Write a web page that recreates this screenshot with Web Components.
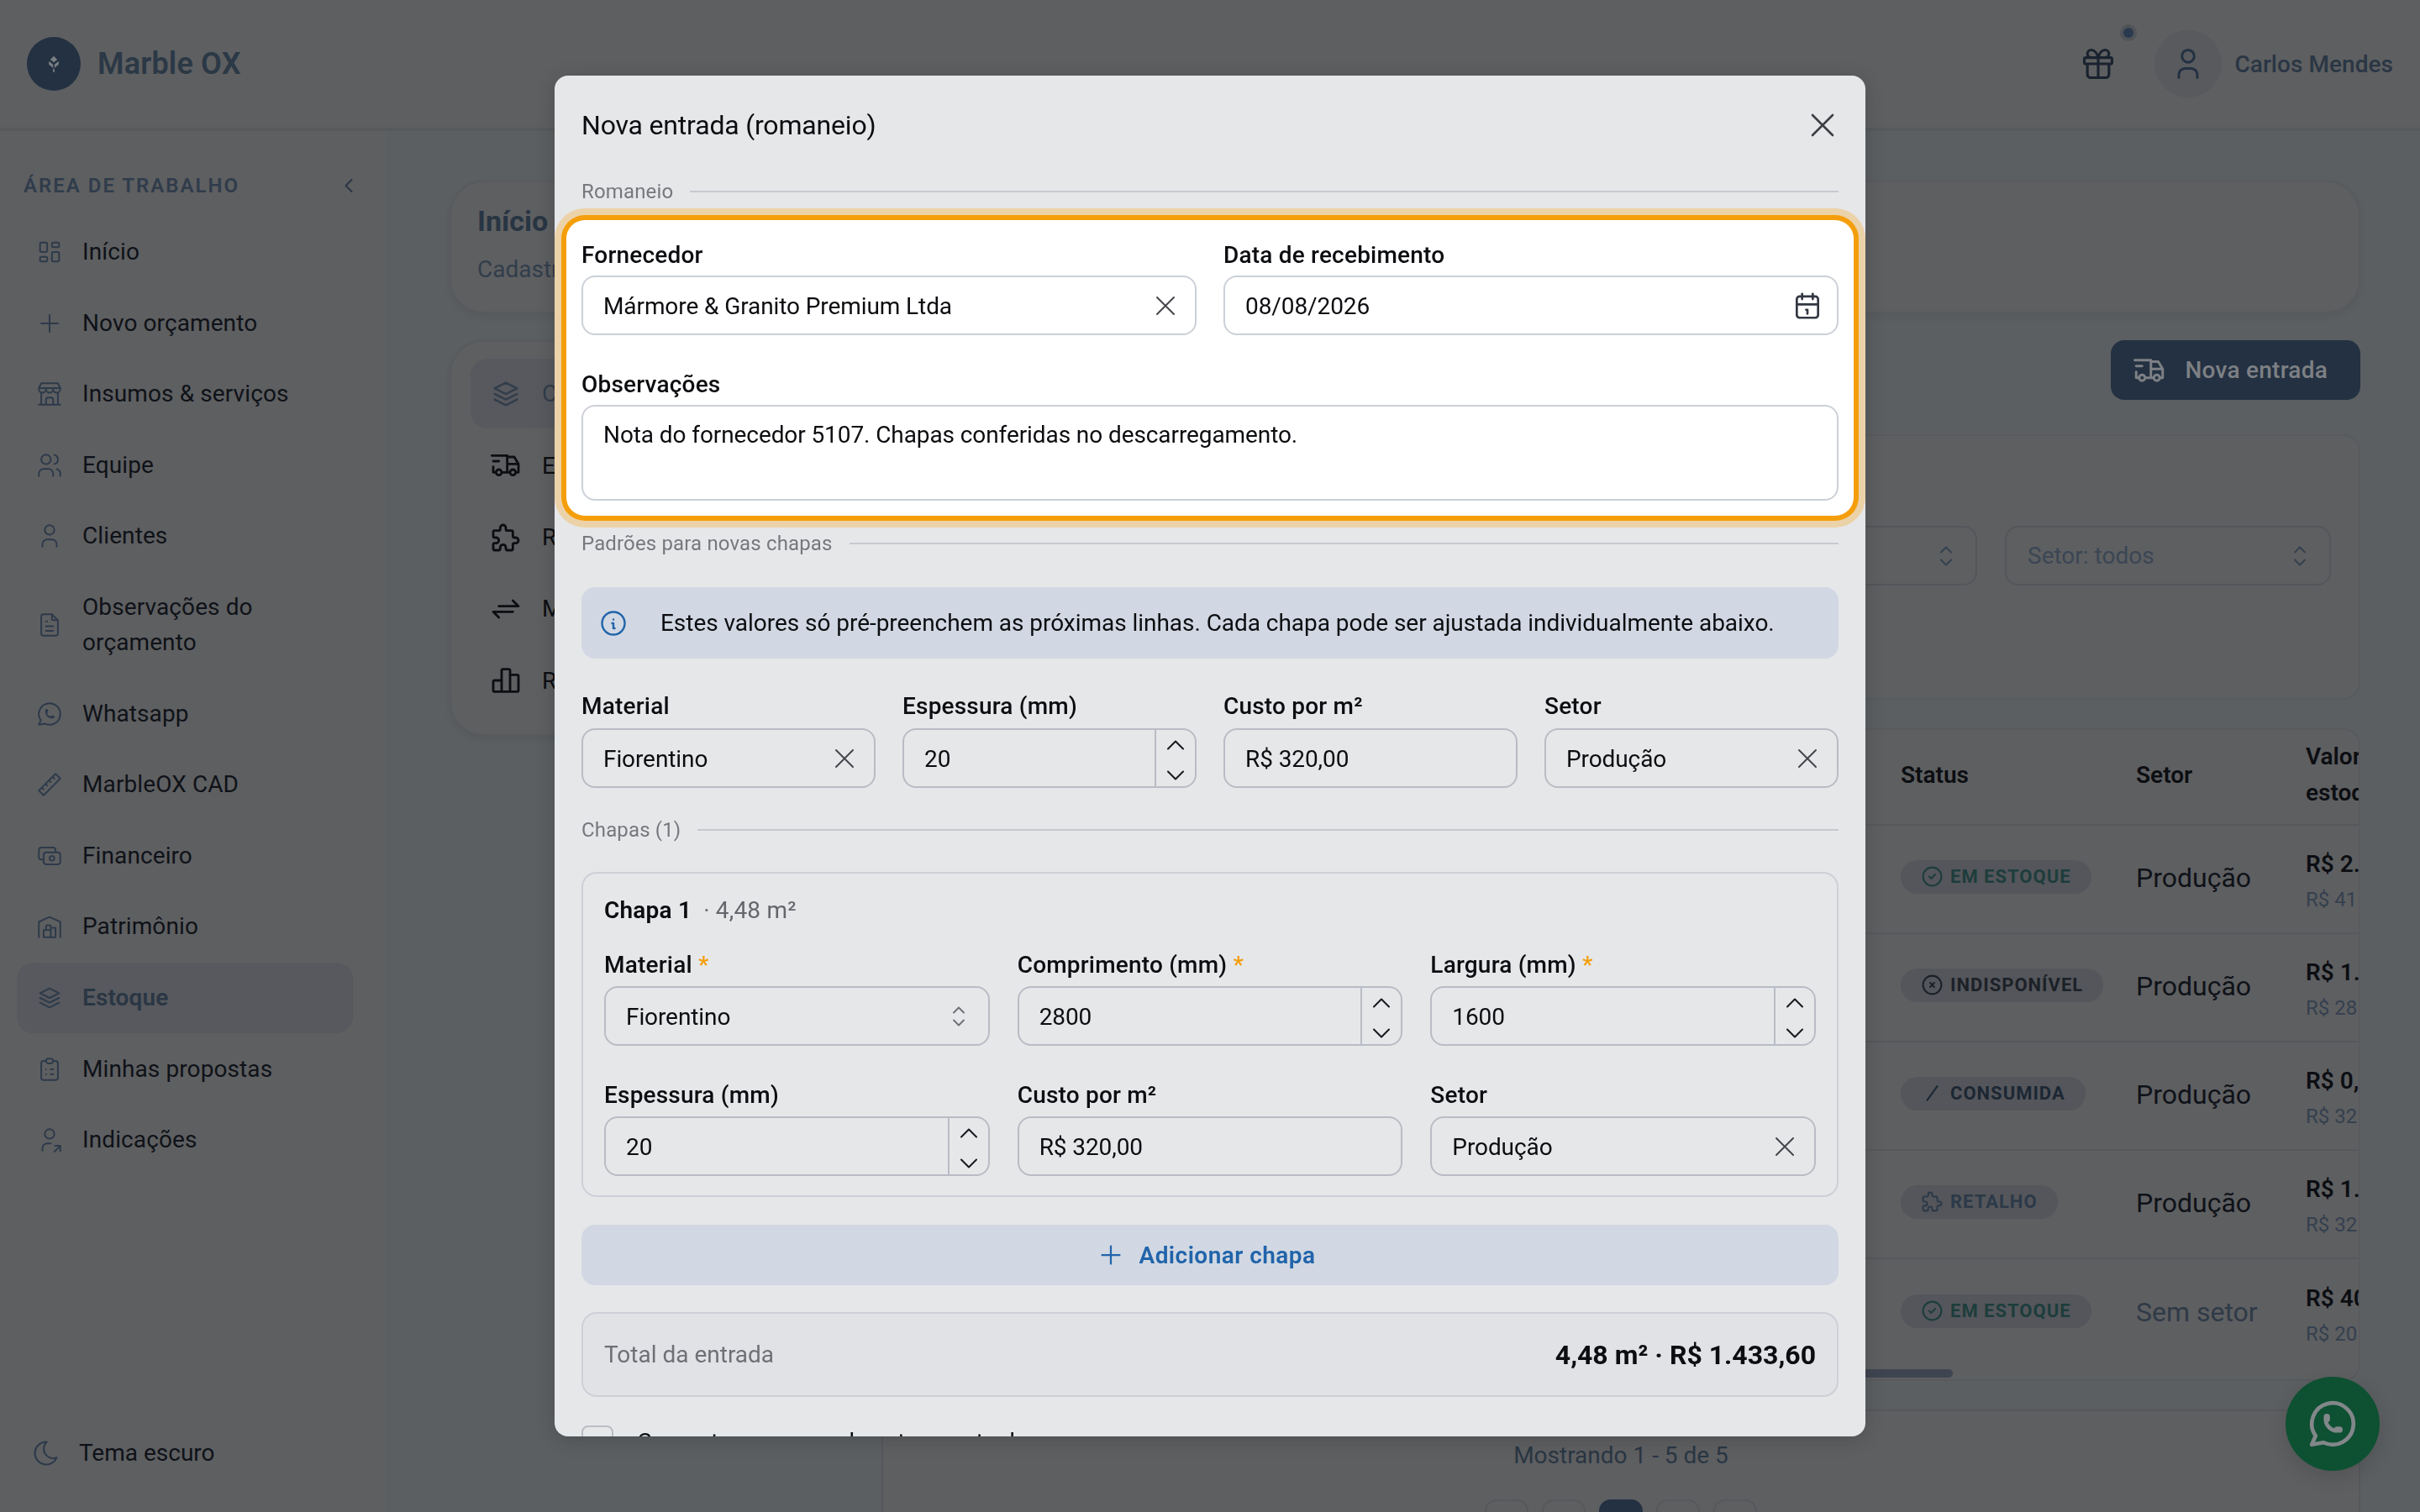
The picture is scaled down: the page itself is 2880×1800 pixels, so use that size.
<!DOCTYPE html>
<html lang="pt-BR">
<head>
<meta charset="utf-8">
<title>Marble OX</title>
<style>
  html, body { margin: 0; width: 2880px; height: 1800px; overflow: hidden; }
  body { font-family: Roboto, "Liberation Sans", sans-serif; font-size: 28px; background: #5b5f62; color: #0f1218; }
  #shell { display: grid; grid-template-rows: 152px 1fr; grid-template-columns: 463px minmax(0, 1fr); height: 1800px; }
  mo-header { grid-column: 1 / 3; }
</style>
</head>
<body>
<div id="shell">
  <mo-header></mo-header>
  <mo-sidebar>
    <mo-nav-item icon="dashboard">Início</mo-nav-item>
    <mo-nav-item icon="plus">Novo orçamento</mo-nav-item>
    <mo-nav-item icon="store">Insumos &amp; serviços</mo-nav-item>
    <mo-nav-item icon="users">Equipe</mo-nav-item>
    <mo-nav-item icon="user">Clientes</mo-nav-item>
    <mo-nav-item icon="file">Observações do<br>orçamento</mo-nav-item>
    <mo-nav-item icon="whatsapp">Whatsapp</mo-nav-item>
    <mo-nav-item icon="ruler">MarbleOX CAD</mo-nav-item>
    <mo-nav-item icon="cash">Financeiro</mo-nav-item>
    <mo-nav-item icon="warehouse">Patrimônio</mo-nav-item>
    <mo-nav-item icon="stack" active>Estoque</mo-nav-item>
    <mo-nav-item icon="clipboard">Minhas propostas</mo-nav-item>
    <mo-nav-item icon="usershare">Indicações</mo-nav-item>
  </mo-sidebar>
  <mo-stock-page></mo-stock-page>
</div>

<mo-fab></mo-fab>

<mo-modal heading="Nova entrada (romaneio)">
  <mo-divider>Romaneio</mo-divider>
  <mo-spotlight>
    <mo-grid cols="2">
      <mo-field label="Fornecedor" value="Mármore &amp; Granito Premium Ltda" kind="clear"></mo-field>
      <mo-field label="Data de recebimento" value="08/08/2026" kind="date"></mo-field>
    </mo-grid>
    <mo-field style="margin-top:38px" label="Observações" value="Nota do fornecedor 5107. Chapas conferidas no descarregamento." kind="textarea"></mo-field>
  </mo-spotlight>
  <mo-divider style="margin-top:13px">Padrões para novas chapas</mo-divider>
  <mo-alert>Estes valores só pré-preenchem as próximas linhas. Cada chapa pode ser ajustada individualmente abaixo.</mo-alert>
  <mo-grid cols="4" style="margin-top:36px; --label-gap:5px">
    <mo-field label="Material" value="Fiorentino" kind="clear"></mo-field>
    <mo-field label="Espessura (mm)" value="20" kind="number"></mo-field>
    <mo-field label="Custo por m²" value="R$ 320,00"></mo-field>
    <mo-field label="Setor" value="Produção" kind="clear"></mo-field>
  </mo-grid>
  <mo-divider style="margin-top:30px">Chapas (1)</mo-divider>
  <mo-chapa-card number="1" area="4,48 m²">
    <mo-field label="Material" value="Fiorentino" kind="select" required></mo-field>
    <mo-field label="Comprimento (mm)" value="2800" kind="number" required></mo-field>
    <mo-field label="Largura (mm)" value="1600" kind="number" required></mo-field>
    <mo-field label="Espessura (mm)" value="20" kind="number"></mo-field>
    <mo-field label="Custo por m²" value="R$ 320,00"></mo-field>
    <mo-field label="Setor" value="Produção" kind="clear"></mo-field>
  </mo-chapa-card>
  <mo-add-button>Adicionar chapa</mo-add-button>
  <mo-total label="Total da entrada" value="4,48 m² · R$ 1.433,60"></mo-total>
  <mo-checkbox>Converter para uso de estoque atual</mo-checkbox>
</mo-modal>

<script>
const ICONS = {
  dashboard: 'M5 4h4a1 1 0 0 1 1 1v6a1 1 0 0 1 -1 1h-4a1 1 0 0 1 -1 -1v-6a1 1 0 0 1 1 -1M5 16h4a1 1 0 0 1 1 1v2a1 1 0 0 1 -1 1h-4a1 1 0 0 1 -1 -1v-2a1 1 0 0 1 1 -1M15 12h4a1 1 0 0 1 1 1v6a1 1 0 0 1 -1 1h-4a1 1 0 0 1 -1 -1v-6a1 1 0 0 1 1 -1M15 4h4a1 1 0 0 1 1 1v2a1 1 0 0 1 -1 1h-4a1 1 0 0 1 -1 -1v-2a1 1 0 0 1 1 -1',
  plus: 'M12 5v14M5 12h14',
  store: 'M3 21l18 0M3 7v1a3 3 0 0 0 6 0v-1m0 1a3 3 0 0 0 6 0v-1m0 1a3 3 0 0 0 6 0v-1h-18l2 -4h14l2 4M5 21l0 -10.15M19 21l0 -10.15M9 21v-4a2 2 0 0 1 2 -2h2a2 2 0 0 1 2 2v4',
  users: 'M5 7a4 4 0 1 0 8 0a4 4 0 1 0 -8 0M3 21v-2a4 4 0 0 1 4 -4h4a4 4 0 0 1 4 4v2M16 3.13a4 4 0 0 1 0 7.75M21 21v-2a4 4 0 0 0 -3 -3.85',
  user: 'M8 7a4 4 0 1 0 8 0a4 4 0 0 0 -8 0M6 21v-2a4 4 0 0 1 4 -4h4a4 4 0 0 1 4 4v2',
  file: 'M14 3v4a1 1 0 0 0 1 1h4M17 21h-10a2 2 0 0 1 -2 -2v-14a2 2 0 0 1 2 -2h7l5 5v11a2 2 0 0 1 -2 2zM9 9l1 0M9 13l6 0M9 17l6 0',
  whatsapp: 'M3 21l1.65 -3.8a9 9 0 1 1 3.4 2.9l-5.05 .9M9 10a.5 .5 0 0 0 1 0v-1a.5 .5 0 0 0 -1 0v1a5 5 0 0 0 5 5h1a.5 .5 0 0 0 0 -1h-1a.5 .5 0 0 0 0 1',
  ruler: 'M17 3l4 4l-14 14l-4 -4zM16 7l-1.5 -1.5M13 10l-1.5 -1.5M10 13l-1.5 -1.5M7 16l-1.5 -1.5',
  cash: 'M7 11a2 2 0 0 1 2 -2h10a2 2 0 0 1 2 2v6a2 2 0 0 1 -2 2h-10a2 2 0 0 1 -2 -2zM12 14a2 2 0 1 0 4 0a2 2 0 0 0 -4 0M17 9v-2a2 2 0 0 0 -2 -2h-10a2 2 0 0 0 -2 2v6a2 2 0 0 0 2 2h2',
  warehouse: 'M3 21v-13l9 -4l9 4v13M13 13h4v8h-10v-6h6M13 21v-9a1 1 0 0 0 -1 -1h-2a1 1 0 0 0 -1 1v3',
  stack: 'M12 4l-8 4l8 4l8 -4l-8 -4M4 12l8 4l8 -4M4 16l8 4l8 -4',
  clipboard: 'M9 5h-2a2 2 0 0 0 -2 2v12a2 2 0 0 0 2 2h10a2 2 0 0 0 2 -2v-12a2 2 0 0 0 -2 -2h-2M9 5a2 2 0 0 1 2 -2h2a2 2 0 0 1 2 2v0a2 2 0 0 1 -2 2h-2a2 2 0 0 1 -2 -2zM9 12l.01 0M13 12l2 0M9 16l.01 0M13 16l2 0',
  usershare: 'M8 7a4 4 0 1 0 8 0a4 4 0 0 0 -8 0M6 21v-2a4 4 0 0 1 4 -4h3M16 22l5 -5M21 21.5v-4.5h-4.5',
  moon: 'M12 3c.132 0 .263 0 .393 0a7.5 7.5 0 0 0 7.92 12.446a9 9 0 1 1 -8.313 -12.454z',
  truck: 'M5 17a2 2 0 1 0 4 0a2 2 0 1 0 -4 0M15 17a2 2 0 1 0 4 0a2 2 0 1 0 -4 0M5 17h-2v-4m-1 -8h11v12m-4 0h6m4 0h2v-6h-8m0 -5h5l3 5M3 9l4 0',
  puzzle: 'M4 7h3a1 1 0 0 0 1 -1v-1a2 2 0 0 1 4 0v1a1 1 0 0 0 1 1h3a1 1 0 0 1 1 1v3a1 1 0 0 0 1 1h1a2 2 0 0 1 0 4h-1a1 1 0 0 0 -1 1v3a1 1 0 0 1 -1 1h-3a1 1 0 0 1 -1 -1v-1a2 2 0 0 0 -4 0v1a1 1 0 0 1 -1 1h-3a1 1 0 0 1 -1 -1v-3a1 1 0 0 1 1 -1h1a2 2 0 0 0 0 -4h-1a1 1 0 0 1 -1 -1v-3a1 1 0 0 1 1 -1',
  exchange: 'M7 10h14l-4 -4M17 14h-14l4 4',
  chart: 'M3 13a1 1 0 0 1 1 -1h4a1 1 0 0 1 1 1v6a1 1 0 0 1 -1 1h-4a1 1 0 0 1 -1 -1zM15 9a1 1 0 0 1 1 -1h4a1 1 0 0 1 1 1v10a1 1 0 0 1 -1 1h-4a1 1 0 0 1 -1 -1zM9 5a1 1 0 0 1 1 -1h4a1 1 0 0 1 1 1v14a1 1 0 0 1 -1 1h-4a1 1 0 0 1 -1 -1zM4 20h14',
  gift: 'M3 9a1 1 0 0 1 1 -1h16a1 1 0 0 1 1 1v2a1 1 0 0 1 -1 1h-16a1 1 0 0 1 -1 -1zM12 8l0 13M19 12v7a2 2 0 0 1 -2 2h-10a2 2 0 0 1 -2 -2v-7M7.5 8a2.5 2.5 0 0 1 0 -5a4.8 8 0 0 1 4.5 5a4.8 8 0 0 1 4.5 -5a2.5 2.5 0 0 1 0 5',
  left: 'M15 6l-6 6l6 6',
  x: 'M18 6l-12 12M6 6l12 12',
  calendar: 'M4 7a2 2 0 0 1 2 -2h12a2 2 0 0 1 2 2v12a2 2 0 0 1 -2 2h-12a2 2 0 0 1 -2 -2v-12zM16 3v4M8 3v4M4 11h16M11 15h1M12 15v3',
  info: 'M3 12a9 9 0 1 0 18 0a9 9 0 0 0 -18 0M12 9h.01M11 12h1v4h1',
  selector: 'M8 9l4 -4l4 4M16 15l-4 4l-4 -4',
  up: 'M6 15l6 -6l6 6',
  down: 'M6 9l6 6l6 -6',
  check: 'M3 12a9 9 0 1 0 18 0a9 9 0 1 0 -18 0M9 12l2 2l4 -4',
  circlex: 'M3 12a9 9 0 1 0 18 0a9 9 0 1 0 -18 0M10 10l4 4m0 -4l-4 4',
  slash: 'M17 5l-10 14'
};

class MoIcon extends HTMLElement {
  constructor() {
    super();
    this.attachShadow({ mode: 'open' });
    const size = this.getAttribute('size') || 34;
    const stroke = this.getAttribute('stroke') || 1.4;
    const d = ICONS[this.getAttribute('name')] || '';
    this.shadowRoot.innerHTML = `
      <style>:host { display: inline-flex; flex: none; } svg { display: block; }</style>
      <svg width="${size}" height="${size}" viewBox="0 0 24 24" fill="none" stroke="currentColor"
           stroke-width="${stroke}" stroke-linecap="round" stroke-linejoin="round"><path d="${d}"/></svg>`;
  }
}
customElements.define('mo-icon', MoIcon);

class MoHeader extends HTMLElement {
  constructor() {
    super();
    this.attachShadow({ mode: 'open' });
    this.shadowRoot.innerHTML = `
      <style>
        :host { display: flex; align-items: center; box-sizing: border-box; height: 152px; padding: 0 32px;
                background: #5e5f61; box-shadow: 0 4px 0 #58595b; position: relative; z-index: 1; }
        .logo { width: 64px; height: 64px; border-radius: 50%; background: #243142; display: flex; align-items: center; justify-content: center; }
        .brand { margin-left: 20px; font-size: 36px; font-weight: 600; letter-spacing: .2px; color: #2b3846; }
        .right { margin-left: auto; display: flex; align-items: center; }
        .gift { position: relative; display: flex; color: #19232f; margin-right: 45px; }
        .dot { position: absolute; left: 52px; top: -21px; width: 12px; height: 12px; border-radius: 50%; background: #2a3a4e; box-shadow: 0 0 0 4px #505357; }
        .avatar { width: 80px; height: 80px; border-radius: 50%; background: #585a5e; color: #233042; display: flex; align-items: center; justify-content: center; }
        .name { margin-left: 15px; font-weight: 500; letter-spacing: .05px; color: #2a3644; }
      </style>
      <div class="logo">
        <svg width="20" height="22" viewBox="0 0 24 26" fill="#7a7f82">
          <path d="M12 2l5 5-5 4-5-4zM5 9l6 5v5L5 14zM19 9l-6 5v5l6-5zM11 20v5h2v-5z"/>
        </svg>
      </div>
      <div class="brand">Marble OX</div>
      <div class="right">
        <div class="gift"><mo-icon name="gift" size="44" stroke="1.7"></mo-icon><span class="dot"></span></div>
        <div class="avatar"><mo-icon name="user" size="44" stroke="1.6"></mo-icon></div>
        <div class="name">Carlos Mendes</div>
      </div>`;
  }
}
customElements.define('mo-header', MoHeader);

class MoSidebar extends HTMLElement {
  constructor() {
    super();
    this.attachShadow({ mode: 'open' });
    this.shadowRoot.innerHTML = `
      <style>
        :host { display: flex; flex-direction: column; box-sizing: border-box; height: 1648px; background: #5e5f61;
                border-right: 1px solid #595c60; padding: 49px 0 48px; }
        .section { display: flex; align-items: center; justify-content: space-between; height: 40px; padding: 0 33px 0 28px; margin-bottom: 17px;
                   font-size: 24px; font-weight: 600; letter-spacing: 2px; color: #303c4b; }
        .section mo-icon { color: #2a3644; }
        nav { display: flex; flex-direction: column; gap: .6px; padding: 0 42px 0 20px; }
        .theme { margin-top: auto; display: flex; align-items: center; gap: 21px; padding-left: 37px; line-height: 44px; color: #0f1218; }
        .theme mo-icon { color: #2d3a4a; }
      </style>
      <div class="section">ÁREA DE TRABALHO <mo-icon name="left" size="28" stroke="1.8"></mo-icon></div>
      <nav><slot></slot></nav>
      <div class="theme"><mo-icon name="moon" size="36" stroke="1.4"></mo-icon>Tema escuro</div>`;
  }
}
customElements.define('mo-sidebar', MoSidebar);

class MoNavItem extends HTMLElement {
  constructor() {
    super();
    this.attachShadow({ mode: 'open' });
    this.shadowRoot.innerHTML = `
      <style>
        :host { display: flex; align-items: center; gap: 22px; padding: 21px 22px; line-height: 42px; letter-spacing: .1px; border-radius: 20px; color: #0f1218; }
        :host([active]) { background: #57595e; color: #2a3644; font-weight: 600; }
        mo-icon { color: #2d3a4a; }
      </style>
      <mo-icon name="${this.getAttribute('icon')}" size="34" stroke="1.4"></mo-icon>
      <span><slot></slot></span>`;
  }
}
customElements.define('mo-nav-item', MoNavItem);

class MoStockPage extends HTMLElement {
  constructor() {
    super();
    this.attachShadow({ mode: 'open' });
    const tabs = [['stack', 'Chapas'], ['truck', 'Entradas'], ['puzzle', 'Retalhos'], ['exchange', 'Movimentações'], ['chart', 'Relatórios']];
    this.shadowRoot.innerHTML = `
      <style>
        :host { display: block; box-sizing: border-box; height: 1648px; overflow: hidden; padding: 63px 71px 0 72px; background: #5b5f62; }
        .card { background: #5e5f61; border: 2px solid #595a5e; box-sizing: border-box; }
        .hero { height: 158px; border-radius: 40px; padding: 24px 31px; box-shadow: 0 4px 8px rgba(0,0,0,.06); }
        .hero h1 { margin: 0; font-size: 34px; font-weight: 700; line-height: 44px; color: #283543; }
        .hero p { margin: 14px 0 0; line-height: 44px; color: #323d4b; }
        .cols { display: grid; grid-template-columns: 480px minmax(0, 1fr); gap: 34px; margin-top: 32px; }
        .tabs { height: 471px; border-radius: 40px; padding: 20px 23px; display: flex; flex-direction: column; box-shadow: 0 4px 8px rgba(0,0,0,.06); }
        .tab { display: flex; align-items: center; gap: 23px; height: 84px; margin-bottom: 2px; padding-left: 22px; border-radius: 20px; color: #0c0e12; }
        .tab.on { background: #57595e; color: #323d4b; }
        .top { display: flex; justify-content: flex-end; height: 71px; margin-bottom: 41px; }
        .btn { display: flex; align-items: center; gap: 21px; height: 71px; box-sizing: border-box; padding: 0 39px 0 25px; border-radius: 16px; background: #243142; color: #7d8084; font-weight: 500; letter-spacing: .25px; }
        .filters { height: 316px; border-radius: 20px; padding: 107px 33px 0; display: flex; justify-content: flex-end; gap: 33px; }
        .select { width: 388px; height: 71px; box-sizing: border-box; border: 2px solid #54565b; border-radius: 16px; display: flex; align-items: center; justify-content: space-between; padding: 0 17px 0 25px; color: #3b4654; }
        .select mo-icon { color: #33404f; }
        .table { height: 777px; margin-top: 34px; border-radius: 20px; position: relative; overflow: hidden; }
        .thumb { position: absolute; left: 0; bottom: 2px; width: 1273px; height: 10px; border-radius: 5px; background: #3f4550; }
        .head { display: grid; grid-template-columns: 1179px 280px 202px 200px; box-sizing: border-box; height: 114px; padding-bottom: 6px; align-items: center; border-bottom: 2px solid #56585c; font-weight: 600; color: #0c0e12; line-height: 43px; }
        .head span { padding-left: 32px; white-space: nowrap; }
        .foot { margin-top: 34px; height: 200px; border: 2px solid #56585c; border-bottom: 0; background: #5e5f61; text-align: center; padding-top: 31px; box-sizing: border-box; color: #2a3644; line-height: 44px; }
        .pages { display: flex; justify-content: center; gap: 16px; margin-top: 30px; }
        .pages span { width: 52px; height: 52px; border: 2px solid #56585c; border-radius: 14px; box-sizing: border-box; }
        .pages .on { background: #243142; border-color: #243142; }
      </style>
      <div class="card hero"><h1>Início</h1><p>Cadastro de estoque</p></div>
      <div class="cols">
        <div class="card tabs">
          ${tabs.map((t, i) => `<div class="tab ${i === 0 ? 'on' : ''}"><mo-icon name="${t[0]}" size="40" stroke="${i === 0 ? 1.5 : 1.7}"></mo-icon>${t[1]}</div>`).join('')}
        </div>
        <div>
          <div class="top"><div class="btn"><mo-icon name="truck" size="42" stroke="1.7"></mo-icon>Nova entrada</div></div>
          <div class="card filters">
            <div class="select">Status: todos<mo-icon name="selector" size="36" stroke="1.3"></mo-icon></div>
            <div class="select">Setor: todos<mo-icon name="selector" size="36" stroke="1.3"></mo-icon></div>
          </div>
          <div class="card table">
            <div class="head"><span></span><span>Status</span><span>Setor</span><span>Valor em<br>estoque</span></div>
            <mo-row status="EM ESTOQUE" icon="check" tone="#1d3d3c" setor="Produção" val="R$ 2.1" sub="R$ 41"></mo-row>
            <mo-row status="INDISPONÍVEL" icon="circlex" tone="#1c2128" setor="Produção" val="R$ 1.2" sub="R$ 28"></mo-row>
            <mo-row status="CONSUMIDA" icon="slash" tone="#1c2733" setor="Produção" val="R$ 0,0" sub="R$ 32"></mo-row>
            <mo-row status="RETALHO" icon="puzzle" tone="#2c3948" setor="Produção" val="R$ 1.1" sub="R$ 32"></mo-row>
            <mo-row status="EM ESTOQUE" icon="check" tone="#1d3d3c" setor="Sem setor" muted val="R$ 40" sub="R$ 20"></mo-row>
            <div class="thumb"></div>
          </div>
          <div class="foot">Mostrando 1 - 5 de 5
            <div class="pages"><span></span><span></span><span class="on"></span><span></span><span></span></div>
          </div>
        </div>
      </div>`;
  }
}

class MoRow extends HTMLElement {
  constructor() {
    super();
    this.attachShadow({ mode: 'open' });
    const tone = this.getAttribute('tone');
    this.shadowRoot.innerHTML = `
      <style>
        :host { display: grid; grid-template-columns: 1179px 280px 202px 200px; box-sizing: border-box; height: 129px; align-items: center; border-bottom: 2px solid #56585c; }
        :host(:last-of-type) { border-bottom: 0; }
        .badge { display: inline-flex; align-items: center; gap: 7px; height: 40px; box-sizing: border-box; padding: 0 24px 0 23px; margin: -4px 0 0 32px; border-radius: 20px; background: #54565b;
                 font-size: 22px; font-weight: 700; letter-spacing: 1px; white-space: nowrap; color: ${tone}; }
        .setor { padding-left: 32px; margin-top: -4px; font-size: 32px; color: ${this.hasAttribute('muted') ? '#2f3a47' : '#0f1218'}; }
        .val { padding: 7px 0 0 32px; white-space: nowrap; }
        .val b { display: block; font-weight: 600; line-height: 42px; color: #0c0e12; }
        .val small { display: block; font-size: 24px; line-height: 42px; color: #35404e; }
      </style>
      <span></span>
      <span><span class="badge"><mo-icon name="${this.getAttribute('icon')}" size="29" stroke="1.7"></mo-icon>${this.getAttribute('status')}</span></span>
      <span class="setor">${this.getAttribute('setor')}</span>
      <span class="val"><b>${this.getAttribute('val')}</b><small>${this.getAttribute('sub')}</small></span>`;
  }
}
customElements.define('mo-row', MoRow);
customElements.define('mo-stock-page', MoStockPage);

class MoFab extends HTMLElement {
  constructor() {
    super();
    this.attachShadow({ mode: 'open' });
    this.shadowRoot.innerHTML = `
      <style>
        :host { position: fixed; z-index: 5; left: 2720px; top: 1639px; width: 112px; height: 112px; border-radius: 50%; background: #0e5032; color: #82878a;
                display: flex; align-items: center; justify-content: center; box-shadow: 0 8px 24px rgba(0,0,0,.12); }
      </style>
      <mo-icon name="whatsapp" size="66" stroke="1.7"></mo-icon>`;
  }
}
customElements.define('mo-fab', MoFab);

class MoModal extends HTMLElement {
  constructor() {
    super();
    this.attachShadow({ mode: 'open' });
    this.shadowRoot.innerHTML = `
      <style>
        :host { position: fixed; z-index: 10; inset: 0; display: flex; align-items: center; justify-content: center; pointer-events: none; }
        .box { width: 1560px; height: 1620px; box-sizing: border-box; background: #e6e7e9; border-radius: 16px; overflow: hidden; box-shadow: 0 4px 24px rgba(0,0,0,.16); }
        header { display: flex; align-items: center; justify-content: space-between; height: 118px; padding: 0 27px 0 32px; font-size: 32px; letter-spacing: -.18px; color: #0c0d10; }
        header mo-icon { color: #3c3e44; }
        .body { padding: 0 32px; }
      </style>
      <div class="box">
        <header><span>${this.getAttribute('heading')}</span><mo-icon name="x" size="48" stroke="1.3"></mo-icon></header>
        <div class="body"><slot></slot></div>
      </div>`;
  }
}
customElements.define('mo-modal', MoModal);

class MoDivider extends HTMLElement {
  constructor() {
    super();
    this.attachShadow({ mode: 'open' });
    this.shadowRoot.innerHTML = `
      <style>
        :host { display: flex; align-items: center; gap: 20px; height: 40px; font-size: 24px; letter-spacing: .15px; color: #76787e; }
        i { flex: 1; height: 2px; background: #c6c9cf; }
      </style>
      <span><slot></slot></span><i></i>`;
  }
}
customElements.define('mo-divider', MoDivider);

class MoSpotlight extends HTMLElement {
  constructor() {
    super();
    this.attachShadow({ mode: 'open' });
    this.shadowRoot.innerHTML = `
      <style>
        :host { display: block; box-sizing: border-box; height: 352px; margin: 14px -18px 0; padding: 21px 18px 0; background: #fff; border-radius: 22px;
                box-shadow: 0 0 0 6px #f59e0b, 0 0 0 14px #ecd2a8; --field-border: #ccd0d8; --label-gap: 3px; --textarea-h: 114px; }
      </style>
      <slot></slot>`;
  }
}
customElements.define('mo-spotlight', MoSpotlight);

class MoGrid extends HTMLElement {
  constructor() {
    super();
    this.attachShadow({ mode: 'open' });
    this.shadowRoot.innerHTML = `
      <style>:host { display: grid; grid-template-columns: repeat(${this.getAttribute('cols')}, 1fr); gap: 32px; }</style>
      <slot></slot>`;
  }
}
customElements.define('mo-grid', MoGrid);

class MoField extends HTMLElement {
  constructor() {
    super();
    this.attachShadow({ mode: 'open' });
    const kind = this.getAttribute('kind') || 'text';
    const star = this.hasAttribute('required') ? ' <span class="star">*</span>' : '';
    let extra = '';
    if (kind === 'clear') extra = '<mo-icon class="side" name="x" size="40" stroke="1.2"></mo-icon>';
    if (kind === 'select') extra = '<mo-icon class="side sel" name="selector" size="36" stroke="1.3"></mo-icon>';
    if (kind === 'date') extra = '<mo-icon class="side cal" name="calendar" size="38" stroke="1.7"></mo-icon>';
    if (kind === 'number') extra = '<div class="spin"><mo-icon name="up" size="36" stroke="1.35"></mo-icon><mo-icon name="down" size="36" stroke="1.35"></mo-icon></div>';
    this.shadowRoot.innerHTML = `
      <style>
        :host { display: block; }
        label { display: block; height: 42px; line-height: 42px; margin-bottom: var(--label-gap, 4px); font-weight: 500; letter-spacing: .2px; color: #0c0d10; white-space: nowrap; }
        .star { color: #f59e0b; }
        .input { display: flex; align-items: center; box-sizing: border-box; height: 71px; border: 2px solid var(--field-border, #b9bcc4); border-radius: 16px; padding-left: 24px; color: #0c0d10; }
        .input.textarea { height: var(--textarea-h, 114px); align-items: flex-start; padding-top: 12px; line-height: 42px; }
        .value { flex: 1; white-space: nowrap; letter-spacing: -.09px; padding-top: 1px; }
        .side { margin-right: 15px; color: #45464c; }
        .sel { margin-right: 17px; color: #6e7076; }
        .cal { margin-right: 16px; color: #323742; }
        .spin { display: flex; flex-direction: column; align-items: center; justify-content: space-between; box-sizing: border-box; width: 48px; height: 100%; padding: 0; border-left: 2px solid var(--field-border, #b9bcc4); color: #15171b; }
      </style>
      <label>${this.getAttribute('label')}${star}</label>
      <div class="input ${kind}"><span class="value">${this.getAttribute('value')}</span>${extra}</div>`;
  }
}
customElements.define('mo-field', MoField);

class MoAlert extends HTMLElement {
  constructor() {
    super();
    this.attachShadow({ mode: 'open' });
    this.shadowRoot.innerHTML = `
      <style>
        :host { display: flex; align-items: center; gap: 38px; box-sizing: border-box; height: 85px; margin-top: 32px; padding-left: 20px; border-radius: 16px; background: #d1d8e3; color: #0c0d10; letter-spacing: -.04px; }
        mo-icon { color: #2164aa; }
      </style>
      <mo-icon name="info" size="36" stroke="1.6"></mo-icon><span><slot></slot></span>`;
  }
}
customElements.define('mo-alert', MoAlert);

class MoChapaCard extends HTMLElement {
  constructor() {
    super();
    this.attachShadow({ mode: 'open' });
    this.shadowRoot.innerHTML = `
      <style>
        :host { display: block; box-sizing: border-box; height: 387px; margin-top: 30px; padding: 24px 25px 0; border: 2px solid #cdd0d6; border-radius: 18px; }
        .title { height: 40px; line-height: 40px; font-weight: 600; letter-spacing: .2px; color: #0c0d10; margin-bottom: 24px; }
        .title span { font-weight: 400; color: #64666c; margin-left: 14px; }
        .grid { display: grid; grid-template-columns: repeat(3, 1fr); column-gap: 33px; row-gap: 38px; }
      </style>
      <div class="title">Chapa ${this.getAttribute('number')}<span>· ${this.getAttribute('area')}</span></div>
      <div class="grid"><slot></slot></div>`;
  }
}
customElements.define('mo-chapa-card', MoChapaCard);

class MoAddButton extends HTMLElement {
  constructor() {
    super();
    this.attachShadow({ mode: 'open' });
    this.shadowRoot.innerHTML = `
      <style>
        :host { display: flex; align-items: center; justify-content: center; gap: 16px; height: 72px; margin-top: 33px; padding-right: 11px; border-radius: 16px; background: #d1d8e3; color: #2164aa; font-weight: 600; letter-spacing: .45px; }
      </style>
      <mo-icon name="plus" size="36" stroke="1.5"></mo-icon><span><slot></slot></span>`;
  }
}
customElements.define('mo-add-button', MoAddButton);

class MoTotal extends HTMLElement {
  constructor() {
    super();
    this.attachShadow({ mode: 'open' });
    this.shadowRoot.innerHTML = `
      <style>
        :host { display: flex; align-items: center; justify-content: space-between; box-sizing: border-box; height: 101px; margin-top: 32px; padding: 0 25px; border: 2px solid #cdd0d6; border-radius: 18px; background: #e0e2e6; color: #6e7076; }
        b { font-size: 32px; font-weight: 700; color: #0c0d10; }
      </style>
      <span>${this.getAttribute('label')}</span><b>${this.getAttribute('value')}</b>`;
  }
}
customElements.define('mo-total', MoTotal);

class MoCheckbox extends HTMLElement {
  constructor() {
    super();
    this.attachShadow({ mode: 'open' });
    this.shadowRoot.innerHTML = `
      <style>
        :host { display: flex; align-items: center; gap: 28px; margin-top: 34px; color: #0c0d10; }
        i { width: 38px; height: 38px; box-sizing: border-box; border: 2px solid #b9bcc4; border-radius: 8px; }
      </style>
      <i></i><span><slot></slot></span>`;
  }
}
customElements.define('mo-checkbox', MoCheckbox);
</script>
</body>
</html>
